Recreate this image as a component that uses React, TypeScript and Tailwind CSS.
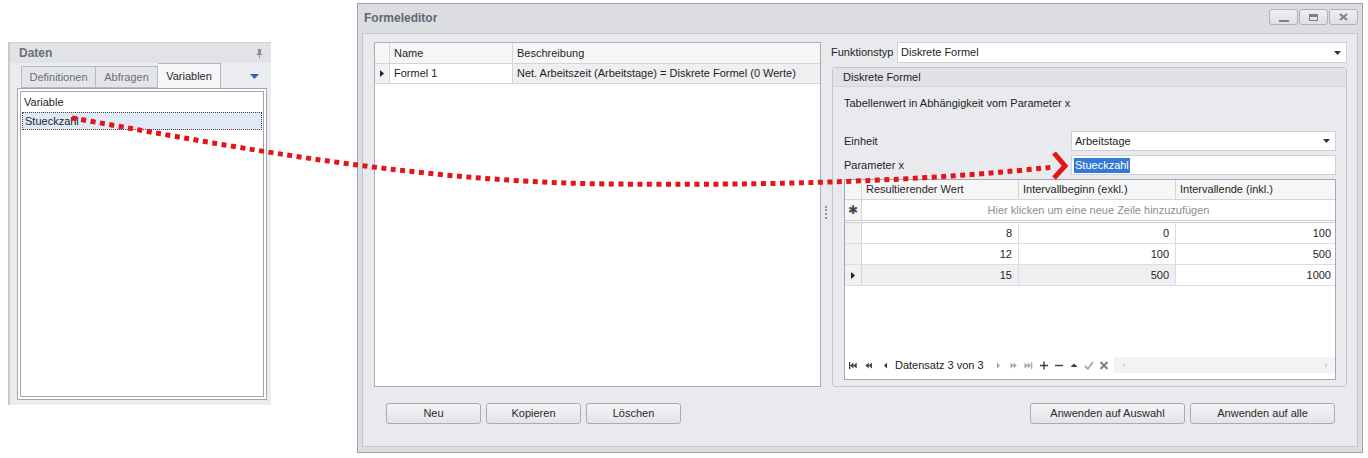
import React from 'react';

// kleines Dropdown-Dreieck für Comboboxen
function DropArrow() {
  return (
    <svg width="7" height="4" viewBox="0 0 7 4">
      <path d="M0 0 L7 0 L3.5 4 Z" fill="#333" />
    </svg>
  );
}

function RowMarker() {
  return (
    <svg width="4" height="7" viewBox="0 0 4 7">
      <path d="M0 0 L4 3.5 L0 7 Z" fill="#222" />
    </svg>
  );
}

function Btn({ label, w }: { label: string; w: string }) {
  return (
    <button
      type="button"
      className={`${w} h-[21px] border border-[#a9acb3] rounded-[3px] bg-gradient-to-b from-[#f5f5f7] to-[#e3e4e8] text-[11px] text-[#2a2a2a] flex items-center justify-center`}
    >
      {label}
    </button>
  );
}

function WinBtn({ kind }: { kind: 'min' | 'max' | 'close' }) {
  return (
    <div className="w-[29px] h-[16px] border border-[#aeb1b8] rounded-[3px] bg-gradient-to-b from-[#eeeff1] to-[#dfe0e4] flex items-center justify-center">
      {kind === 'min' && <div className="w-[10px] h-[2px] bg-[#7c808a] mt-[7px]" />}
      {kind === 'max' && <div className="w-[9px] h-[7px] border border-[#7c808a] border-t-[3px]" />}
      {kind === 'close' && (
        <svg width="9" height="8" viewBox="0 0 9 8">
          <path d="M1 1 L8 7 M8 1 L1 7" stroke="#7c808a" strokeWidth="2" />
        </svg>
      )}
    </div>
  );
}

// Navigator-Symbole (DevExpress-Stil)
function NavIcon({ d, color }: { d: string; color: string }) {
  return (
    <svg width="10" height="9" viewBox="0 0 10 9" className="shrink-0">
      <path d={d} fill={color} />
    </svg>
  );
}

function Navigator() {
  const dark = '#3a3d44';
  const grey = '#a3a6ad';
  return (
    <div className="flex items-center h-[16px] pl-[3px] text-[11px] text-[#222]">
      <div className="flex items-center gap-[6px]">
        <NavIcon d="M1 1h1.3v7H1z M2.3 4.5 L5.5 1.5 V7.5 Z M5.5 4.5 L8.7 1.5 V7.5 Z" color={dark} />
        <NavIcon d="M1.5 4.5 L4.7 1.5 V7.5 Z M4.7 4.5 L7.9 1.5 V7.5 Z" color={dark} />
        <NavIcon d="M4 4.5 L7 1.5 V7.5 Z" color={dark} />
      </div>
      <span className="ml-[5px] mr-[10px]">Datensatz 3 von 3</span>
      <div className="flex items-center gap-[5px]">
        <NavIcon d="M3 1.5 L6 4.5 L3 7.5 Z" color={grey} />
        <NavIcon d="M1.5 1.5 L4.7 4.5 L1.5 7.5 Z M4.7 1.5 L7.9 4.5 L4.7 7.5 Z" color={grey} />
        <NavIcon d="M0.5 1.5 L3.7 4.5 L0.5 7.5 Z M3.7 1.5 L6.9 4.5 L3.7 7.5 Z M7 1h1.3v7H7z" color={grey} />
        <NavIcon d="M4.3 0.5h1.4v8H4.3z M1 3.8h8v1.4H1z" color={dark} />
        <NavIcon d="M1 3.8h8v1.4H1z" color={dark} />
        <NavIcon d="M5 2.5 L8.5 6 H1.5 Z" color={dark} />
        <svg width="10" height="9" viewBox="0 0 10 9" className="shrink-0">
          <path d="M1 5 L3.8 7.8 L9 1" stroke={grey} strokeWidth="1.8" fill="none" />
        </svg>
        <svg width="10" height="9" viewBox="0 0 10 9" className="shrink-0">
          <path d="M1.5 1 L8.5 8 M8.5 1 L1.5 8" stroke="#7d8088" strokeWidth="2" />
        </svg>
      </div>
      <div className="ml-[5px] flex-1 h-[16px] bg-[#f3f3f5] flex items-center justify-between px-[4px]">
        <NavIcon d="M4 4.5 L6.5 2 V7 Z" color="#d3d5d9" />
        <NavIcon d="M4 2 L6.5 4.5 L4 7 Z" color="#d3d5d9" />
      </div>
    </div>
  );
}

const rows = [
  { v: '8', a: '0', b: '100' },
  { v: '12', a: '100', b: '500' },
  { v: '15', a: '500', b: '1000', sel: true },
];

function Intervals() {
  return (
    <div className="mt-[4px] h-[201px] border border-[#a5a8af] bg-white flex flex-col">
      <div className="flex h-[20px] border-b border-[#d3d5d9] bg-[#f6f6f7]">
        <div className="w-[17px] border-r border-[#d3d5d9]" />
        <div className="w-[157px] border-r border-[#d3d5d9] pl-[4px] flex items-center">Resultierender Wert</div>
        <div className="w-[157px] border-r border-[#d3d5d9] pl-[4px] flex items-center">Intervallbeginn (exkl.)</div>
        <div className="flex-1 pl-[4px] flex items-center">Intervallende (inkl.)</div>
      </div>
      <div className="flex h-[21px] border-b border-[#c9cbd0]">
        <div className="w-[17px] border-r border-[#d3d5d9] bg-[#f6f6f7] flex items-center justify-center text-[12px] text-[#444]">✱</div>
        <div className="flex-1 flex items-center justify-center text-[#8b8e95]">
          Hier klicken um eine neue Zeile hinzuzufügen
        </div>
      </div>
      <div className="h-[2px] bg-white border-b border-[#c9cbd0]" />
      {rows.map((r) => (
        <div key={r.v} className="flex h-[21px] border-b border-[#dcdde1]">
          <div className="w-[17px] border-r border-[#d3d5d9] bg-[#f1f1f3] flex items-center justify-center">
            {r.sel && <RowMarker />}
          </div>
          <div className={`w-[157px] border-r border-[#dcdde1] pr-[6px] flex items-center justify-end ${r.sel ? 'bg-[#efeff1]' : ''}`}>{r.v}</div>
          <div className={`w-[157px] border-r border-[#dcdde1] pr-[6px] flex items-center justify-end ${r.sel ? 'bg-[#efeff1]' : ''}`}>{r.a}</div>
          <div className="flex-1 pr-[4px] flex items-center justify-end">{r.b}</div>
        </div>
      ))}
      <div className="flex-1" />
      <div className="pb-[6px]">
        <Navigator />
      </div>
    </div>
  );
}

export default function App() {
  return (
    <div className="relative w-[1368px] h-[458px] bg-white overflow-hidden flex items-start font-['Liberation_Sans',Arial,sans-serif] text-[11px] text-[#1e1e1e]">
      {/* Daten-Panel */}
      <div className="ml-[8px] mt-[42px] w-[263px] h-[363px] border-l-[2px] border-[#c7c9ce] border-t border-t-[#d2d3d8] bg-[#ebecef] flex flex-col">
        <div className="h-[20px] bg-[#e2e3e7] flex items-center justify-between pl-[9px] pr-[8px]">
          <span className="text-[12px] font-bold text-[#6b6f78]">Daten</span>
          <svg width="7" height="9" viewBox="0 0 7 9">
            <path d="M1.5 0h4v1h-0.5v4h1.5v1h-2.5v3h-1v-3H0.5V5H2V1H1.5z" fill="#8d9098" />
          </svg>
        </div>
        <div className="flex items-end h-[25px] pl-[11px] pr-[12px]">
          <div className="w-[75px] h-[22px] border border-[#b8bac0] bg-[#e4e5e9] text-[#6a6e77] flex items-center justify-center">Definitionen</div>
          <div className="w-[62px] h-[22px] border border-l-0 border-[#b8bac0] bg-[#e4e5e9] text-[#6a6e77] flex items-center justify-center">Abfragen</div>
          <div className="w-[63px] h-[25px] border border-l-0 border-b-0 border-[#b0b3b9] bg-[#f7f7f9] text-[#2a2a2a] flex items-center justify-center">Variablen</div>
          <div className="flex-1 flex justify-end self-center pt-[2px]">
            <svg width="9" height="5" viewBox="0 0 9 5">
              <path d="M0 0 L9 0 L4.5 5 Z" fill="#2e5eb8" />
            </svg>
          </div>
        </div>
        <div className="ml-[7px] w-[250px] h-[312px] border border-[#a3a6ad] bg-white p-[2px]">
          <div className="h-full border border-[#a3a6ad] flex flex-col">
            <div className="h-[20px] flex items-center pl-[3px]">Variable</div>
            <div className="h-[18px] mx-[1px] bg-[#e1e9f9] border border-dotted border-[#444] flex items-center pl-[2px]">Stueckzahl</div>
          </div>
        </div>
      </div>

      {/* Formeleditor-Fenster */}
      <div className="ml-[86px] mt-[3px] w-[1006px] h-[450px] border border-[#9da0a8] bg-[#dcdde1] flex flex-col">
        <div className="h-[29px] flex items-center justify-between pl-[6px] pr-[4px]">
          <span className="text-[12px] font-bold text-[#626773] -mt-[1px]">Formeleditor</span>
          <div className="flex gap-[1px] -mt-[3px]">
            <WinBtn kind="min" />
            <WinBtn kind="max" />
            <WinBtn kind="close" />
          </div>
        </div>
        <div className="mx-[4px] mb-[5px] flex-1 border border-[#c3c5cb] bg-[#e9eaee] flex flex-col pl-[11px] pr-[10px] pt-[8px]">
          <div className="flex h-[345px]">
            {/* Formelliste */}
            <div className="w-[447px] border border-[#a9acb3] bg-white flex flex-col">
              <div className="flex h-[21px] border-b border-[#d3d5d9] bg-[#f6f6f7]">
                <div className="w-[15px] border-r border-[#d3d5d9]" />
                <div className="w-[123px] border-r border-[#d3d5d9] pl-[4px] flex items-center">Name</div>
                <div className="flex-1 pl-[4px] flex items-center">Beschreibung</div>
              </div>
              <div className="flex h-[20px] border-b border-[#d3d5d9]">
                <div className="w-[15px] border-r border-[#d3d5d9] bg-[#f1f1f3] flex items-center justify-center">
                  <RowMarker />
                </div>
                <div className="w-[123px] border-r border-[#d3d5d9] pl-[4px] flex items-center">Formel 1</div>
                <div className="flex-1 pl-[4px] flex items-center bg-[#efeff1]">
                  Net. Arbeitszeit (Arbeitstage) = Diskrete Formel (0 Werte)
                </div>
              </div>
            </div>

            {/* Splitter */}
            <div className="w-[10px] flex items-center justify-center">
              <div className="h-[13px] border-l-2 border-dotted border-[#9095a0] -mt-[4px]" />
            </div>

            {/* Formel-Details */}
            <div className="w-[516px] flex flex-col">
              <div className="flex items-center h-[21px]">
                <span className="w-[66px]">Funktionstyp</span>
                <div className="flex-1 h-[21px] border border-[#cfd1d5] bg-white flex items-center justify-between pl-[3px] pr-[5px]">
                  <span>Diskrete Formel</span>
                  <DropArrow />
                </div>
              </div>
              <div className="mt-[4px] ml-[1px] h-[320px] border border-[#c3c5cb] rounded-[3px] flex flex-col">
                <div className="h-[19px] bg-[#e1e2e6] border-b border-[#d3d4d8] flex items-center pl-[10px]">Diskrete Formel</div>
                <div className="flex flex-col pl-[11px] pr-[10px]">
                  <div className="mt-[9px] h-[14px] flex items-center">Tabellenwert in Abhängigkeit vom Parameter x</div>
                  <div className="mt-[21px] flex items-center h-[20px]">
                    <span className="w-[227px]">Einheit</span>
                    <div className="flex-1 h-[20px] border border-[#cfd1d5] bg-white flex items-center justify-between pl-[3px] pr-[5px]">
                      <span>Arbeitstage</span>
                      <DropArrow />
                    </div>
                  </div>
                  <div className="mt-[4px] flex items-center h-[20px]">
                    <span className="w-[227px]">Parameter x</span>
                    <div className="flex-1 h-[20px] border border-[#cfd1d5] bg-white flex items-center pl-[2px]">
                      <span className="bg-[#3479d6] text-white px-[1px] leading-[15px]">Stueckzahl</span>
                    </div>
                  </div>
                  <Intervals />
                </div>
              </div>
            </div>
          </div>

          <div className="mt-[16px] flex justify-between pl-[12px] pr-[12px]">
            <div className="flex gap-[5px]">
              <Btn label="Neu" w="w-[95px]" />
              <Btn label="Kopieren" w="w-[95px]" />
              <Btn label="Löschen" w="w-[95px]" />
            </div>
            <div className="flex gap-[5px]">
              <Btn label="Anwenden auf Auswahl" w="w-[155px]" />
              <Btn label="Anwenden auf alle" w="w-[145px]" />
            </div>
          </div>
        </div>
      </div>

      {/* roter Verbindungspfeil */}
      <svg className="absolute inset-0 pointer-events-none" width="1368" height="458" viewBox="0 0 1368 458">
        <path
          d="M72 118 C 200 140, 400 182, 611 184 S 950 178, 1054 167"
          stroke="#e3151b"
          strokeWidth="5"
          strokeDasharray="5 4.5"
          fill="none"
        />
        <path d="M1054 153 L1065 166 L1054 178" stroke="#e3151b" strokeWidth="5" fill="none" />
      </svg>
    </div>
  );
}
